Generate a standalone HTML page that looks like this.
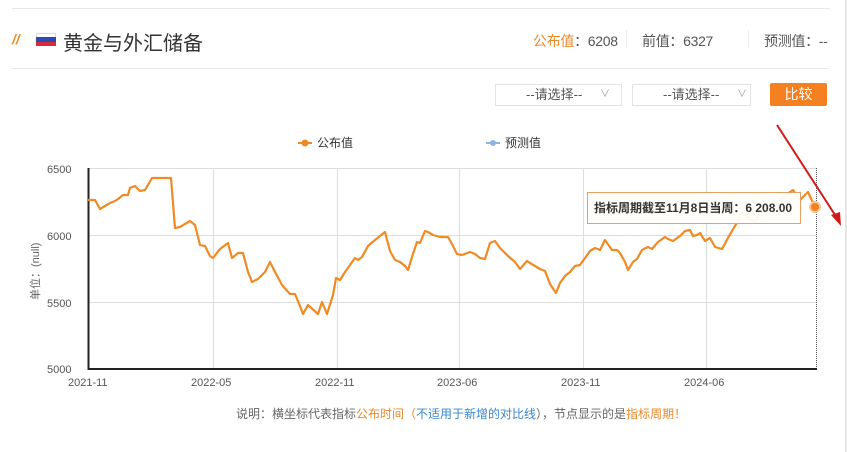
<!DOCTYPE html>
<html><head><meta charset="utf-8"><style>
body{margin:0;width:847px;height:452px;background:#fff;overflow:hidden;font-family:"Liberation Sans","Noto Sans CJK SC",sans-serif;position:relative}
.a{position:absolute}
.sel{position:absolute;top:84px;height:22px;border:1px solid #e3e3e3;box-sizing:border-box;font-size:13px;color:#555;line-height:20px}
</style></head><body>
<div class="a" style="left:12px;top:8px;width:818px;height:1px;background:#e8e8e8"></div>
<div class="a" style="left:12px;top:68px;width:818px;height:1px;background:#e8e8e8"></div>
<div class="a" style="left:845px;top:0;width:2px;height:452px;background:#e6e6e6"></div>
<div class="a" style="left:12px;top:31px;font-size:14px;color:#f08a24;font-weight:bold;font-style:italic">//</div>
<div class="a" style="left:36px;top:33px;width:20px;height:13px">
<div style="height:4px;background:#fff;border:1px solid #ddd;border-bottom:0;box-sizing:border-box"></div><div style="height:4.5px;background:#2b4bb0"></div><div style="height:4.5px;background:#d52b3a"></div></div>
<div class="a" style="left:63px;top:27px;font-size:20px;color:#333">黄金与外汇储备</div>
<div class="a" style="left:533px;top:31px;font-size:14px;color:#555;letter-spacing:-0.3px"><span style="color:#e8892d">公布值</span>：6208</div>
<div class="a" style="left:642px;top:31px;font-size:14px;color:#555;letter-spacing:-0.3px">前值：6327</div>
<div class="a" style="left:764px;top:31px;font-size:14px;color:#555;letter-spacing:-0.3px">预测值：--</div>
<div class="a" style="left:626px;top:30px;width:1px;height:18px;background:#eee"></div>
<div class="a" style="left:748px;top:30px;width:1px;height:18px;background:#eee"></div>
<div class="sel" style="left:495px;width:127px"><span style="margin-left:30px">--请选择--</span><span style="position:absolute;left:104px;color:#999;font-size:10px">∨</span></div>
<div class="sel" style="left:632px;width:119px"><span style="margin-left:30px">--请选择--</span><span style="position:absolute;left:104px;color:#999;font-size:10px">∨</span></div>
<div class="a" style="left:770px;top:83px;width:57px;height:23px;background:#f5801f;color:#fff;font-size:14px;text-align:center;line-height:23px;border-radius:2px">比较</div>
<svg class="a" style="left:0;top:0" width="847" height="452">
<g stroke="#ddd" stroke-width="1">
<line x1="88" y1="168.5" x2="816" y2="168.5"/><line x1="88" y1="235.5" x2="816" y2="235.5"/><line x1="88" y1="302.5" x2="816" y2="302.5"/>
<line x1="213.5" y1="168" x2="213.5" y2="369"/><line x1="337.5" y1="168" x2="337.5" y2="369"/><line x1="459.5" y1="168" x2="459.5" y2="369"/><line x1="583.5" y1="168" x2="583.5" y2="369"/><line x1="706.5" y1="168" x2="706.5" y2="369"/>
</g>
<line x1="816.5" y1="168" x2="816.5" y2="369" stroke="#555" stroke-dasharray="1,1"/>
<line x1="88.5" y1="168" x2="88.5" y2="370" stroke="#222" stroke-width="2"/>
<line x1="88" y1="369" x2="817" y2="369" stroke="#222" stroke-width="2"/>
<g font-size="11" fill="#555" font-family="Liberation Sans,sans-serif">
<text x="47" y="173">6500</text><text x="47" y="240">6000</text><text x="47" y="307">5500</text><text x="47" y="373">5000</text>
<text x="68" y="386">2021-11</text><text x="191" y="386">2022-05</text><text x="315" y="386">2022-11</text><text x="437" y="386">2023-06</text><text x="561" y="386">2023-11</text><text x="684" y="386">2024-06</text>
</g>
<text transform="translate(39,300) rotate(-90)" font-size="11" fill="#666">单位：(null)</text>
<polyline fill="none" stroke="#f08a24" stroke-width="2.2" stroke-linejoin="round" points="88,200 95,200 100,209 110,203 115,201 118,199 123,195 128,195 130,188 135,186 140,191 145,190 152,178 171,178 175,228 180,227 190,221 195,225 200,245 205,246 210,256 213,258 220,249 228,243 232,258 238,253 243,253 248,272 252,282 258,279 265,272 270,262 275,272 282,285 290,294 295,294 300,306 303,314 308,305 318,314 322,302 327,314 333,295 336,278 340,280 345,272 355,258 358,260 362,257 368,246 375,240 385,232 390,251 395,260 400,262 405,266 408,270 413,254 417,242 420,243 425,231 428,232 433,235 440,237 448,237 452,244 457,254 462,255 470,252 475,254 480,258 485,259 490,243 495,241 500,248 508,256 515,262 520,269 527,261 530,263 535,266 540,269 545,271 550,284 556,293 560,283 565,276 570,272 575,266 580,265 590,251 595,248 600,250 605,240 612,250 617,250 620,253 625,262 628,270 633,262 637,259 642,250 648,247 652,249 658,242 665,237 668,239 673,241 680,236 685,231 690,230 693,236 697,235 700,233 705,241 710,238 715,247 722,249 728,238 732,231 735,226 738,221 742,212 750,219 755,223 760,213 770,210 780,200 787,194 793,190 800,200 808,192 815,207"/>
<rect x="587.5" y="192.5" width="213" height="31" fill="#fffdf9" fill-opacity="0.95" stroke="#e8a060"/>
<text x="594" y="212" font-size="12" font-weight="bold" fill="#333">指标周期截至11月8日当周：6 208.00</text>
<circle cx="815" cy="207" r="5" fill="#f5801f" stroke="#fbc89a" stroke-width="2"/>
<line x1="777" y1="125" x2="837" y2="218" stroke="#d11a1a" stroke-width="2"/>
<path d="M841,226 L831,215 L840,212 Z" fill="#d11a1a"/>
<line x1="298" y1="143" x2="312" y2="143" stroke="#f08a24" stroke-width="2"/><circle cx="305" cy="143" r="3.5" fill="#f08a24"/>
<text x="317" y="147" font-size="12" fill="#333">公布值</text>
<line x1="486" y1="143" x2="500" y2="143" stroke="#8fb4e0" stroke-width="2"/><circle cx="493" cy="143" r="3" fill="#8fb4e0"/>
<text x="505" y="147" font-size="12" fill="#333">预测值</text>
<text x="236" y="418" font-size="12" fill="#666">说明：横坐标代表指标<tspan fill="#e8892d">公布时间（</tspan><tspan fill="#3a87c8">不适用于新增的对比线</tspan>），节点显示的是<tspan fill="#e8892d">指标周期！</tspan></text>
</svg>
</body></html>
